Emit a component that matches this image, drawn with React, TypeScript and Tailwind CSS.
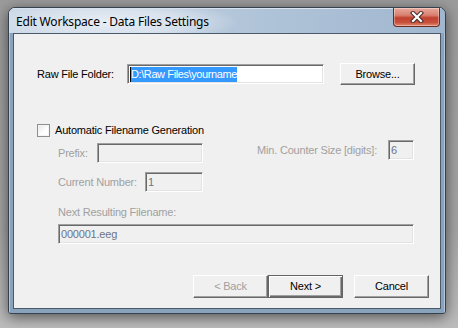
const sunken =
  "border border-t-[#a0a0a0] border-l-[#a0a0a0] border-b-white border-r-white shadow-[inset_1px_1px_0_#696969,inset_-1px_-1px_0_#e3e3e3]";

function Field({ w, value, disabled }: { w: string; value?: string; disabled?: boolean }) {
  return (
    <div
      className={`${w} h-[20px] ${sunken} ${disabled ? "bg-[#f0f0f0] text-[#6d7488]" : "bg-white text-black"} flex items-center pl-[2px] text-[11px] leading-[13px]`}
    >
      {value}
    </div>
  );
}

function Button({ label, isDefault, disabled }: { label: string; isDefault?: boolean; disabled?: boolean }) {
  return (
    <div
      className={`w-[75px] h-[23px] flex items-center justify-center bg-[#f0f0f0] text-[11px] ${
        isDefault
          ? "border border-[#646464] shadow-[inset_1px_1px_0_#ffffff,inset_-1px_-1px_0_#696969,inset_-2px_-2px_0_#a0a0a0]"
          : "border border-t-white border-l-white border-b-[#696969] border-r-[#696969] shadow-[inset_-1px_-1px_0_#a0a0a0]"
      } ${disabled ? "text-[#a0a0a0]" : "text-black"}`}
    >
      {label}
    </div>
  );
}

export default function App() {
  return (
    <div className="w-[458px] h-[328px] overflow-hidden bg-[linear-gradient(180deg,#9b9b9b_0%,#a4a4a4_70%,#bcbcbc_100%)] pl-[8px] pt-[7px] font-['Liberation_Sans',Arial,sans-serif]">
      <div className="w-[438px] h-[307px] flex flex-col rounded-t-[7px] rounded-b-[3px] border border-[#36414d] bg-[#8aa3bd] shadow-[0_3px_14px_rgba(0,0,0,0.55)] overflow-hidden">
        {/* title bar */}
        <div className="h-[25px] flex items-start justify-between bg-[radial-gradient(ellipse_130px_22px_at_100px_14px,#e6edf4_0%,#d8e2ed_55%,rgba(214,225,236,0)_100%),linear-gradient(90deg,#c9d7e5_0%,#b3c6da_50%,#a0b7cf_100%)] shadow-[inset_1px_1px_0_#d7e2ee]">
          <div className="pl-[7px] pt-[6px] text-[12px] leading-[16px] tracking-[-0.2px] text-black font-['Noto_Sans',sans-serif]">
            Edit Workspace - Data Files Settings
          </div>
          <div className="mr-[5px] w-[47px] h-[19px] rounded-b-[4px] border border-t-0 border-[#6b2b24] bg-[linear-gradient(180deg,#e9a99c_0%,#d8806f_40%,#c2402f_55%,#c8503c_80%,#e08a6e_100%)] shadow-[inset_0_0_0_1px_rgba(255,255,255,0.35)] flex items-center justify-center">
            <svg width="14" height="12" viewBox="0 0 14 12">
              <path d="M3 2 L11 10 M11 2 L3 10" stroke="#4a2a2a" strokeWidth="4.2" strokeLinecap="square" />
              <path d="M3 2 L11 10 M11 2 L3 10" stroke="#ffffff" strokeWidth="2.2" strokeLinecap="square" />
            </svg>
          </div>
        </div>

        {/* frame + client */}
        <div className="flex-1 px-[4px] pb-[4px] shadow-[inset_1px_0_0_#b5c6d8,inset_-1px_0_0_#b5c6d8]">
          <div className="h-full border border-[#4b5a6a] bg-[#f0f0f0] flex flex-col text-[11px] leading-[13px] tracking-[-0.2px]">
            {/* raw folder row */}
            <div className="mt-[29px] pl-[23px] flex items-center h-[22px]">
              <div className="w-[90px] text-black">Raw File Folder:</div>
              <div className={`w-[197px] h-[20px] ${sunken} bg-white flex items-center pl-[2px]`}>
                <div className="w-[1px] h-[15px] bg-black" />
                <span className="bg-[#3399ff] text-white h-[15px] leading-[15px] tracking-[-0.4px]">D:\Raw Files\yourname</span>
              </div>
              <div className="ml-[16px]">
                <div className="w-[75px] h-[22px] flex items-center justify-center bg-[#f0f0f0] border border-t-white border-l-white border-b-[#696969] border-r-[#696969] shadow-[inset_-1px_-1px_0_#a0a0a0] text-black">
                  Browse...
                </div>
              </div>
            </div>

            {/* checkbox row */}
            <div className="mt-[39px] pl-[23px] flex items-center h-[13px]">
              <div className="w-[13px] h-[13px] border border-[#8e8f8f] bg-[linear-gradient(135deg,#e6e6e6_0%,#ffffff_60%)] shadow-[inset_0_0_0_1px_#f4f4f4]" />
              <div className="ml-[5px] text-black">Automatic Filename Generation</div>
            </div>

            {/* prefix / min counter */}
            <div className="mt-[3px] pl-[44px] pr-[26px] flex items-start justify-between h-[23px]">
              <div className="mt-[3px] flex items-center">
                <div className="w-[39px] text-[#a0a0a0]">Prefix:</div>
                <Field w="w-[106px]" disabled />
              </div>
              <div className="flex items-center">
                <div className="text-[#a0a0a0] mr-[11px]">Min. Counter Size [digits]:</div>
                <Field w="w-[26px]" value="6" disabled />
              </div>
            </div>

            {/* current number */}
            <div className="mt-[9px] pl-[44px] flex items-center h-[20px]">
              <div className="w-[87px] text-[#a0a0a0]">Current Number:</div>
              <Field w="w-[58px]" value="1" disabled />
            </div>

            {/* next filename */}
            <div className="mt-[14px] pl-[44px] text-[#a0a0a0]">Next Resulting Filename:</div>
            <div className="mt-[5px] pl-[44px]">
              <Field w="w-[356px]" value="000001.eeg" disabled />
            </div>

            {/* buttons */}
            <div className="mt-[31px] pl-[179px] flex">
              <Button label="< Back" disabled />
              <Button label="Next >" isDefault />
              <div className="ml-[11px]">
                <Button label="Cancel" />
              </div>
            </div>
          </div>
        </div>
      </div>
    </div>
  );
}
